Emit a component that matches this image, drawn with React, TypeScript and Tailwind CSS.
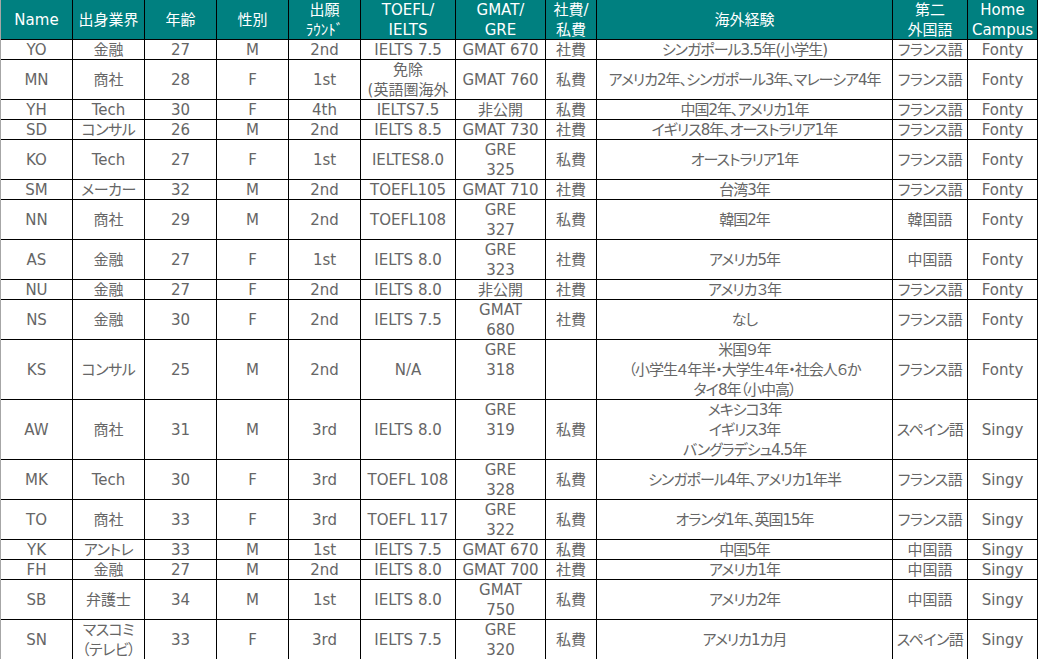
type Cell = string | string[]

type Row = { h: number; cells: Cell[] }

const HEAD: Cell[] = [
  'Name',
  '出身業界',
  '年齢',
  '性別',
  ['出願', 'ﾗｳﾝﾄﾞ'],
  ['TOEFL/', 'IELTS'],
  ['GMAT/', 'GRE'],
  ['社費/', '私費'],
  '海外経験',
  ['第二', '外国語'],
  ['Home', 'Campus'],
]

const ROWS: Row[] = [
  { h: 20, cells: ['YO', '金融', '27', 'M', '2nd', 'IELTS 7.5', 'GMAT 670', '社費', 'シンガポール3.5年(小学生)', 'フランス語', 'Fonty'] },
  { h: 40, cells: ['MN', '商社', '28', 'F', '1st', ['免除', '(英語圏海外'], 'GMAT 760', '私費', 'アメリカ2年、シンガポール3年、マレーシア4年', 'フランス語', 'Fonty'] },
  { h: 20, cells: ['YH', 'Tech', '30', 'F', '4th', 'IELTS7.5', '非公開', '私費', '中国2年、アメリカ1年', 'フランス語', 'Fonty'] },
  { h: 20, cells: ['SD', 'コンサル', '26', 'M', '2nd', 'IELTS 8.5', 'GMAT 730', '社費', 'イギリス8年、オーストラリア1年', 'フランス語', 'Fonty'] },
  { h: 40, cells: ['KO', 'Tech', '27', 'F', '1st', 'IELTES8.0', ['GRE', '325'], '私費', 'オーストラリア1年', 'フランス語', 'Fonty'] },
  { h: 20, cells: ['SM', 'メーカー', '32', 'M', '2nd', 'TOEFL105', 'GMAT 710', '社費', '台湾3年', 'フランス語', 'Fonty'] },
  { h: 40, cells: ['NN', '商社', '29', 'M', '2nd', 'TOEFL108', ['GRE', '327'], '私費', '韓国2年', '韓国語', 'Fonty'] },
  { h: 40, cells: ['AS', '金融', '27', 'F', '1st', 'IELTS 8.0', ['GRE', '323'], '社費', 'アメリカ5年', '中国語', 'Fonty'] },
  { h: 20, cells: ['NU', '金融', '27', 'F', '2nd', 'IELTS 8.0', '非公開', '社費', 'アメリカ３年', 'フランス語', 'Fonty'] },
  { h: 40, cells: ['NS', '金融', '30', 'F', '2nd', 'IELTS 7.5', ['GMAT', '680'], '社費', 'なし', 'フランス語', 'Fonty'] },
  { h: 60, cells: ['KS', 'コンサル', '25', 'M', '2nd', 'N/A', ['GRE', '318', ''], '', ['米国９年', '（小学生４年半・大学生４年・社会人６か', 'タイ8年（小中高）'], 'フランス語', 'Fonty'] },
  { h: 60, cells: ['AW', '商社', '31', 'M', '3rd', 'IELTS 8.0', ['GRE', '319', ''], '私費', ['メキシコ3年', 'イギリス3年', 'バングラデシュ4.5年'], 'スペイン語', 'Singy'] },
  { h: 40, cells: ['MK', 'Tech', '30', 'F', '3rd', 'TOEFL 108', ['GRE', '328'], '私費', 'シンガポール4年、アメリカ1年半', 'フランス語', 'Singy'] },
  { h: 40, cells: ['TO', '商社', '33', 'F', '3rd', 'TOEFL 117', ['GRE', '322'], '私費', 'オランダ1年、英国15年', 'フランス語', 'Singy'] },
  { h: 20, cells: ['YK', 'アントレ', '33', 'M', '1st', 'IELTS 7.5', 'GMAT 670', '私費', '中国5年', '中国語', 'Singy'] },
  { h: 20, cells: ['FH', '金融', '27', 'M', '2nd', 'IELTS 8.0', 'GMAT 700', '社費', 'アメリカ1年', '中国語', 'Singy'] },
  { h: 40, cells: ['SB', '弁護士', '34', 'M', '1st', 'IELTS 8.0', ['GMAT', '750'], '私費', 'アメリカ2年', '中国語', 'Singy'] },
  { h: 40, cells: ['SN', ['マスコミ', '（テレビ）'], '33', 'F', '3rd', 'IELTS 7.5', ['GRE', '320'], '私費', 'アメリカ1カ月', 'スペイン語', 'Singy'] },
]

const hasKana = (c: Cell) => /[\u30a0-\u30ff]/.test(Array.isArray(c) ? c.join('') : c)

function Lines({ value }: { value: Cell }) {
  const lines = Array.isArray(value) ? value : [value]
  return (
    <>
      {lines.map((l, i) => (
        <span key={i} className="block whitespace-nowrap">
          {l === '' ? '\u00a0' : l}
        </span>
      ))}
    </>
  )
}

const cellBase =
  'flex flex-col items-center justify-center overflow-hidden text-center border-r border-b border-black leading-[20px]'

export default function App() {
  return (
    <div
      className="w-[1039px] h-[659px] overflow-hidden bg-white text-[15px] [font-feature-settings:'palt']"
      style={{ fontFamily: '"DejaVu Sans", "Noto Sans CJK JP", sans-serif' }}
    >
      <div className="grid w-[1038px] grid-cols-[72px_72px_72px_72px_72px_95px_90px_51px_296px_75px_70px] border-l border-[#a6a6a6]">
        {HEAD.map((c, i) => (
          <div key={i} className={`${cellBase} h-[40px] bg-[#008080] text-white leading-[19px]`}>
            <Lines value={c} />
          </div>
        ))}
        {ROWS.map((r, ri) =>
          r.cells.map((c, ci) => {
            // 海外経験 の列はカナが多いので詰める
            const track = ci === 8 ? 'tracking-[-1px]' : hasKana(c) ? 'tracking-[-0.5px]' : ''
            return (
              <div
                key={`${ri}-${ci}`}
                className={`${cellBase} ${track} text-[#666666]`}
                style={{ height: r.h }}
              >
                <Lines value={c} />
              </div>
            )
          })
        )}
      </div>
    </div>
  )
}
